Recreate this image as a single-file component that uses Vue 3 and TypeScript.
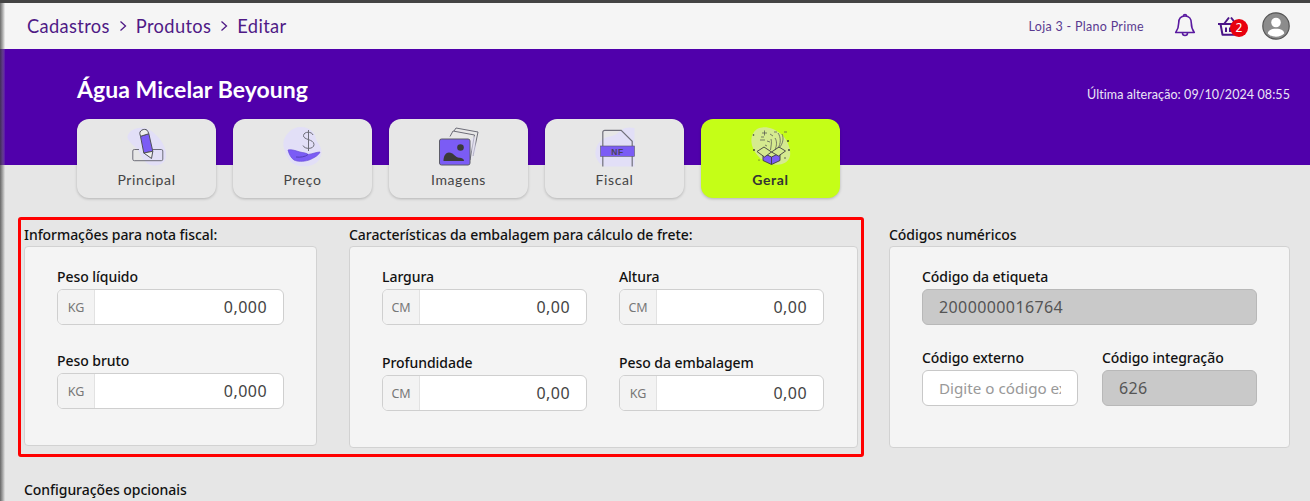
<script setup lang="ts">
interface Field { label: string; unit: string; value: string }
const fiscal: Field[] = [
  { label: 'Peso líquido', unit: 'KG', value: '0,000' },
  { label: 'Peso bruto', unit: 'KG', value: '0,000' },
]
const pack: Field[] = [
  { label: 'Largura', unit: 'CM', value: '0,00' },
  { label: 'Altura', unit: 'CM', value: '0,00' },
  { label: 'Profundidade', unit: 'CM', value: '0,00' },
  { label: 'Peso da embalagem', unit: 'KG', value: '0,00' },
]
</script>

<template>
  <div class="page">
    <div class="topline"></div>
    <header class="bar">
      <nav class="crumbs">
        <span>Cadastros</span>
        <svg class="chev" viewBox="0 0 8 12"><path d="M1.500 1.500 6.500 6 1.500 10.500" /></svg>
        <span>Produtos</span>
        <svg class="chev" viewBox="0 0 8 12"><path d="M1.500 1.500 6.500 6 1.500 10.500" /></svg>
        <span>Editar</span>
      </nav>
      <div class="bar-right">
        <span class="store">Loja 3 - Plano Prime</span>
        <svg class="bell" viewBox="0 0 24 26" fill="none" stroke="#5a1aa0" stroke-width="1.600" stroke-linejoin="round">
          <path d="M12 3c-4.200 0-6.300 3-6.300 7 0 5-1.200 7-3 9.500h18.600c-1.800-2.500-3-4.500-3-9.500 0-4-2.100-7-6.300-7Z" />
          <path d="M10.500 3a1.500 1.500 0 0 1 3 0M9.500 20a2.500 2.500 0 0 0 5 0" />
        </svg>
        <div class="cart">
          <svg viewBox="0 0 26 20" fill="none" stroke="#4a1488" stroke-width="2" stroke-linejoin="round">
            <path d="M1 8h24M3.500 8 5.500 18.800h15L22.500 8M7 8 12 1.500M19 8 14 1.500" />
            <path d="M9 11.500v4.500M13 11.500v4.500M17 11.500v4.500" />
          </svg>
          <span class="badge">2</span>
        </div>
        <svg class="avatar" viewBox="0 0 28 28">
          <circle cx="14" cy="14" r="13.200" fill="#8c8c8c" stroke="#555" stroke-width="1.200" />
          <circle cx="14" cy="10.500" r="4.800" fill="#fff" />
          <path d="M5.800 21.500c0-3 3-4.800 8.200-4.800s8.200 1.800 8.200 4.800c-1.800 2-4.800 3.200-8.200 3.200s-6.400-1.200-8.200-3.200Z" fill="#fff" />
        </svg>
      </div>
    </header>

    <section class="hero">
      <div class="hero-row">
        <h1>Água Micelar Beyoung</h1>
        <span class="updated">Última alteração: 09/10/2024 08:55</span>
      </div>
      <div class="tabs">
        <div class="tab">
          <svg viewBox="0 0 40 40" class="ic">
            <path d="M9 1.500C16-1 24 2 30 9c6 6 10 14 9 21-1 6-6 9-13 8.500-7-.5-10-6-13-12C10 20 2 16 .5 11 0 7 4 3 9 1.500Z" fill="#e2dff7" />
            <path d="M12 22.500H7.300a1.500 1.500 0 0 0-1.500 1.500v8.200a1.500 1.500 0 0 0 1.500 1.500h27a1.500 1.500 0 0 0 1.500-1.500V24a1.500 1.500 0 0 0-1.500-1.500H26" fill="none" stroke="#6d6d78" stroke-width="1" />
            <path d="M13.500 9.300 21.800 6.700 25.800 24.300 16.800 26Z" fill="#7b5cf5" stroke="#50505a" stroke-width="1" />
            <path d="M13.500 9.300 12.800 6.500C12.500 2.500 19.500.8 20.800 4.300L21.800 6.700Z" fill="#eee" stroke="#50505a" stroke-width="1" />
            <path d="M16.800 26 25.800 24.300 24.500 31.500Z" fill="#eee" stroke="#50505a" stroke-width="1" />
          </svg>
          <span>Principal</span>
        </div>
        <div class="tab">
          <svg viewBox="0 0 40 40" class="ic">
            <path d="M6 5c7-7 18-6 24 0 3 3 2 7 5 11 4 5 5 11 1 17-4 6-13 7-20 6C8 38 4 30 2 24-1 17 0 11 6 5Z" fill="#e2dff7" />
            <path d="M30 8C29 4.500 21 4 20.500 8.500c-.5 4.500 10.500 3.500 10.500 9 0 5-9.500 5-11 1M25.500 3v21" fill="none" stroke="#6d6d78" stroke-width="1" />
            <path d="M5 23c4-1 8 1 12 2 4 1 7 1 8 2.500 4-.5 9-2.500 12-2.500-1 3-6 6-11 8-6 2-12 1.500-15 0-3-2-5-6-6-10Z" fill="#7b5cf5" stroke="#6a50d8" stroke-width=".7" />
            <path d="M13 30c4 .5 9 0 12-2.500" fill="none" stroke="#4f3bb0" stroke-width=".9" />
          </svg>
          <span>Preço</span>
        </div>
        <div class="tab">
          <svg viewBox="0 0 40 40" class="ic">
            <path d="M11 9.500 14 4l21.500 4L31 33M15 4 17 1l22 4-5 24" fill="none" stroke="#6d6d78" stroke-width="1" />
            <path d="M32 12l4-3 1 14-4 10Z" fill="#e2dff7" opacity=".6" />
            <rect x="0.500" y="12" width="30.500" height="26" rx="2" fill="#7b5cf5" stroke="#5c5c68" stroke-width="1" />
            <circle cx="21.500" cy="20.500" r="3.300" fill="#3a3a3a" />
            <path d="M4.500 34c0-4 1.500-8.500 5.500-8.500 4.500 0 5.500 4 9 5 2.500.5 6 .5 6 3.500Z" fill="#3a3a3a" />
          </svg>
          <span>Imagens</span>
        </div>
        <div class="tab">
          <svg viewBox="0 0 40 40" class="ic">
            <path d="M39.500 1C30-1 26 3 24 5 20 10 12 9 8 12 2 16-1 24 1 30c2 5 5 8 8 9.500h30.500Z" fill="#e2dff7" />
            <path d="M7.800 39.500V5.300a2 2 0 0 1 2-2h16.400l11 11v25.200" fill="none" stroke="#70707a" stroke-width="1.200" />
            <rect x="5.500" y="19" width="34" height="10.300" fill="#7b5cf5" stroke="#5c5c68" stroke-width=".6" />
            <text x="22.500" y="27.600" class="nf">NF</text>
          </svg>
          <span>Fiscal</span>
        </div>
        <div class="tab active">
          <svg viewBox="0 0 40 40" class="ic">
            <path d="M6 2c7-4 17-1 24 5 7 6 10 15 9 22-2 8-11 10-18 8C12 35 5 29 2 21-1 14 0 6 6 2Z" fill="#d5ea8f" />
            <path d="M12 26v7.500l8.500 4 8.500-4V26l-8.500 4Z" fill="#7b5cf5" stroke="#3f3f3f" stroke-width=".9" />
            <path d="M20.500 30v7.500" stroke="#3f3f3f" stroke-width=".9" />
            <path d="M6 24.500l7-4.500 7.500 5-7 5ZM20.500 25l7.500-5 6.500 4-7 5Z" fill="#d5ea8f" stroke="#3f3f3f" stroke-width=".9" />
            <path d="M11 6h5M13.500 3.500v5M9 13h5M10 10h3M19 7l3 2M16 14l3 1M23 5h3M24 11c2 3 2 7 0 12M27 6c3 4 3 11 0 15M31 7c2 4 1 10-3 14M20 12c1 3 0 7-.5 11M33 5h3M14 18l2 1" fill="none" stroke="#4f4f4f" stroke-width=".7" />
            <circle cx="2.500" cy="8" r=".8" fill="#333" /><circle cx="3" cy="23" r=".9" fill="#333" /><circle cx="37" cy="14" r=".9" fill="#333" /><circle cx="38" cy="23" r=".9" fill="#333" /><circle cx="34" cy="31" r=".7" fill="#333" /><circle cx="8" cy="33" r=".6" fill="#333" />
          </svg>
          <span>Geral</span>
        </div>
      </div>
    </section>

    <main class="content">
      <div class="forms">
        <div class="marked">
          <div class="col-fiscal">
            <h3>Informações para nota fiscal:</h3>
            <div class="panel fiscal-panel">
              <div v-for="f in fiscal" :key="f.label" class="field">
                <label>{{ f.label }}</label>
                <div class="group">
                  <span class="unit">{{ f.unit }}</span>
                  <span class="val">{{ f.value }}</span>
                </div>
              </div>
            </div>
          </div>
          <div class="col-pack">
            <h3>Características da embalagem para cálculo de frete:</h3>
            <div class="panel pack-panel">
              <div v-for="f in pack" :key="f.label" class="field">
                <label>{{ f.label }}</label>
                <div class="group">
                  <span class="unit">{{ f.unit }}</span>
                  <span class="val">{{ f.value }}</span>
                </div>
              </div>
            </div>
          </div>
        </div>
        <div class="col-codes">
          <h3>Códigos numéricos</h3>
          <div class="panel codes-panel">
            <div class="field wide">
              <label>Código da etiqueta</label>
              <div class="box disabled">2000000016764</div>
            </div>
            <div class="field">
              <label>Código externo</label>
              <input class="box placeholder" placeholder="Digite o código externo" />
            </div>
            <div class="field">
              <label>Código integração</label>
              <div class="box disabled">626</div>
            </div>
          </div>
        </div>
      </div>
      <h3 class="optional">Configurações opcionais</h3>
    </main>
    <div class="edge"></div>
  </div>
</template>

<style>
html, body { margin: 0; background: #e6e6e6; overflow: hidden; }
</style>

<style scoped>
.page {
  position: relative;
  width: 1310px;
  height: 501px;
  overflow: hidden;
  background: #e6e6e6;
  font-family: "Noto Sans", "Open Sans", sans-serif;
  color: #111;
}
.topline { height: 3px; background: #444; }
.edge {
  position: absolute;
  left: 0; top: 3px; bottom: 0;
  width: 5px;
  background: linear-gradient(90deg, rgba(60,60,60,.75), rgba(120,120,120,.5) 60%, rgba(200,200,200,.1));
}
.bar {
  height: 46px;
  background: #f5f5f5;
  display: flex;
  align-items: center;
  justify-content: space-between;
  padding: 0 20px 0 27px;
}
.crumbs {
  display: flex;
  align-items: center;
  gap: 9px;
  font-family: "Lato", sans-serif;
  font-size: 18.300px;
  color: #4f1a86;
  letter-spacing: .35px;
}
.chev { width: 8px; height: 12px; fill: none; stroke: #4f1a86; stroke-width: 1.300; }
.bar-right { display: flex; align-items: center; }
.store { font-family: "Lato", sans-serif; font-size: 12.500px; color: #5a3a90; letter-spacing: .3px; margin-right: 29px; }
.bell { width: 24px; height: 26px; margin-right: 20px; }
.cart { position: relative; width: 26px; height: 20px; margin-right: 19px; }
.cart svg { width: 26px; height: 20px; display: block; }
.badge {
  position: absolute;
  left: 13px; top: 3px;
  width: 18px; height: 18px;
  border-radius: 50%;
  background: #e8000e;
  color: #fff;
  font-size: 12px;
  line-height: 18px;
  text-align: center;
}
.avatar { width: 28px; height: 28px; }

.hero { height: 116px; background: #5000ab; position: relative; padding: 0 20px 0 77px; }
.hero-row { position: relative; height: 70px; }
h1 { position: absolute; left: 0; top: 25px; margin: 0; line-height: 30px; font-family: "Lato", sans-serif; font-size: 23px; font-weight: 700; color: #fff; letter-spacing: .05px; }
.updated { position: absolute; right: 0; top: 37px; line-height: 18px; font-family: "Lato", sans-serif; font-size: 12.500px; color: #ece6f6; letter-spacing: .08px; }
.tabs { display: flex; gap: 17px; }
.tab {
  width: 139px; height: 79px;
  box-sizing: border-box;
  background: #e7e7e7;
  border-radius: 12px;
  box-shadow: 0 1px 3px rgba(0,0,0,.22);
  display: flex;
  flex-direction: column;
  align-items: center;
  padding-top: 8px;
  font-family: "Lato", sans-serif;
  font-size: 14px;
  color: #444;
  letter-spacing: .6px;
}
.tab .ic { width: 40px; height: 40px; margin-bottom: 4px; overflow: visible; }
.tab.active { background: #c5fe17; color: #333; font-weight: 700; }
.nf { font-family: "Liberation Sans", sans-serif; font-size: 8.500px; font-weight: 700; fill: #4a4458; text-anchor: middle; }

.content { padding: 52px 20px 0 18px; }
.forms { display: flex; align-items: flex-start; }
.marked {
  box-sizing: border-box;
  width: 846px; height: 240px;
  border: 3px solid #f00;
  border-radius: 3px;
  display: flex;
  padding: 6px 3px 0 3px;
}
h3 { margin: 0 0 2px; font-size: 14px; font-weight: 500; line-height: 18px; color: #111; letter-spacing: -.05px; }
.col-fiscal { width: 293px; margin-right: 32px; }
.col-pack { width: 509px; }
.col-codes { width: 401px; margin-left: 25px; padding-top: 9px; }
.panel {
  box-sizing: border-box;
  background: #f4f4f4;
  border: 1px solid #d2d2d2;
  border-radius: 4px;
}
.fiscal-panel { height: 200px; padding: 21px 32px 0; display: flex; flex-direction: column; gap: 27px; }
.pack-panel { height: 202px; padding: 21px 32px 0; display: grid; grid-template-columns: 205px 205px; column-gap: 32px; row-gap: 29px; align-content: start; }
.codes-panel { height: 202px; padding: 21px 32px 0; display: grid; grid-template-columns: 156px 155px; column-gap: 24px; row-gap: 24px; align-content: start; }
.wide { grid-column: 1 / 3; }
.field label { display: block; font-size: 14px; font-weight: 500; line-height: 18px; margin-bottom: 3px; color: #111; letter-spacing: -.05px; }
.group {
  height: 36px;
  box-sizing: border-box;
  border: 1px solid #cfcfcf;
  border-radius: 6px;
  background: #fff;
  display: flex;
  overflow: hidden;
}
.unit {
  width: 37px;
  box-sizing: border-box;
  background: #f3f3f3;
  border-right: 1px solid #e2e2e2;
  display: flex; align-items: center; justify-content: center;
  font-size: 12.500px; color: #777;
}
.val {
  flex: 1;
  text-align: right;
  padding-right: 16px;
  font-size: 16px;
  letter-spacing: .45px;
  line-height: 34px;
  color: #444;
}
.box {
  display: block;
  width: 100%;
  height: 36px;
  box-sizing: border-box;
  border: 1px solid #c8c8c8;
  border-radius: 6px;
  padding: 0 16px;
  font-family: "Noto Sans", "Open Sans", sans-serif;
  font-size: 16px;
  letter-spacing: .4px;
  line-height: 34px;
}
.disabled { background: #c9c9c9; border-color: #b8b8b8; color: #555; }
.placeholder { background: #fff; font-size: 15.200px; letter-spacing: 0; outline: none; }
.placeholder::placeholder { color: #999; opacity: 1; }
.optional { margin: 24px 0 0 6px; }
</style>
